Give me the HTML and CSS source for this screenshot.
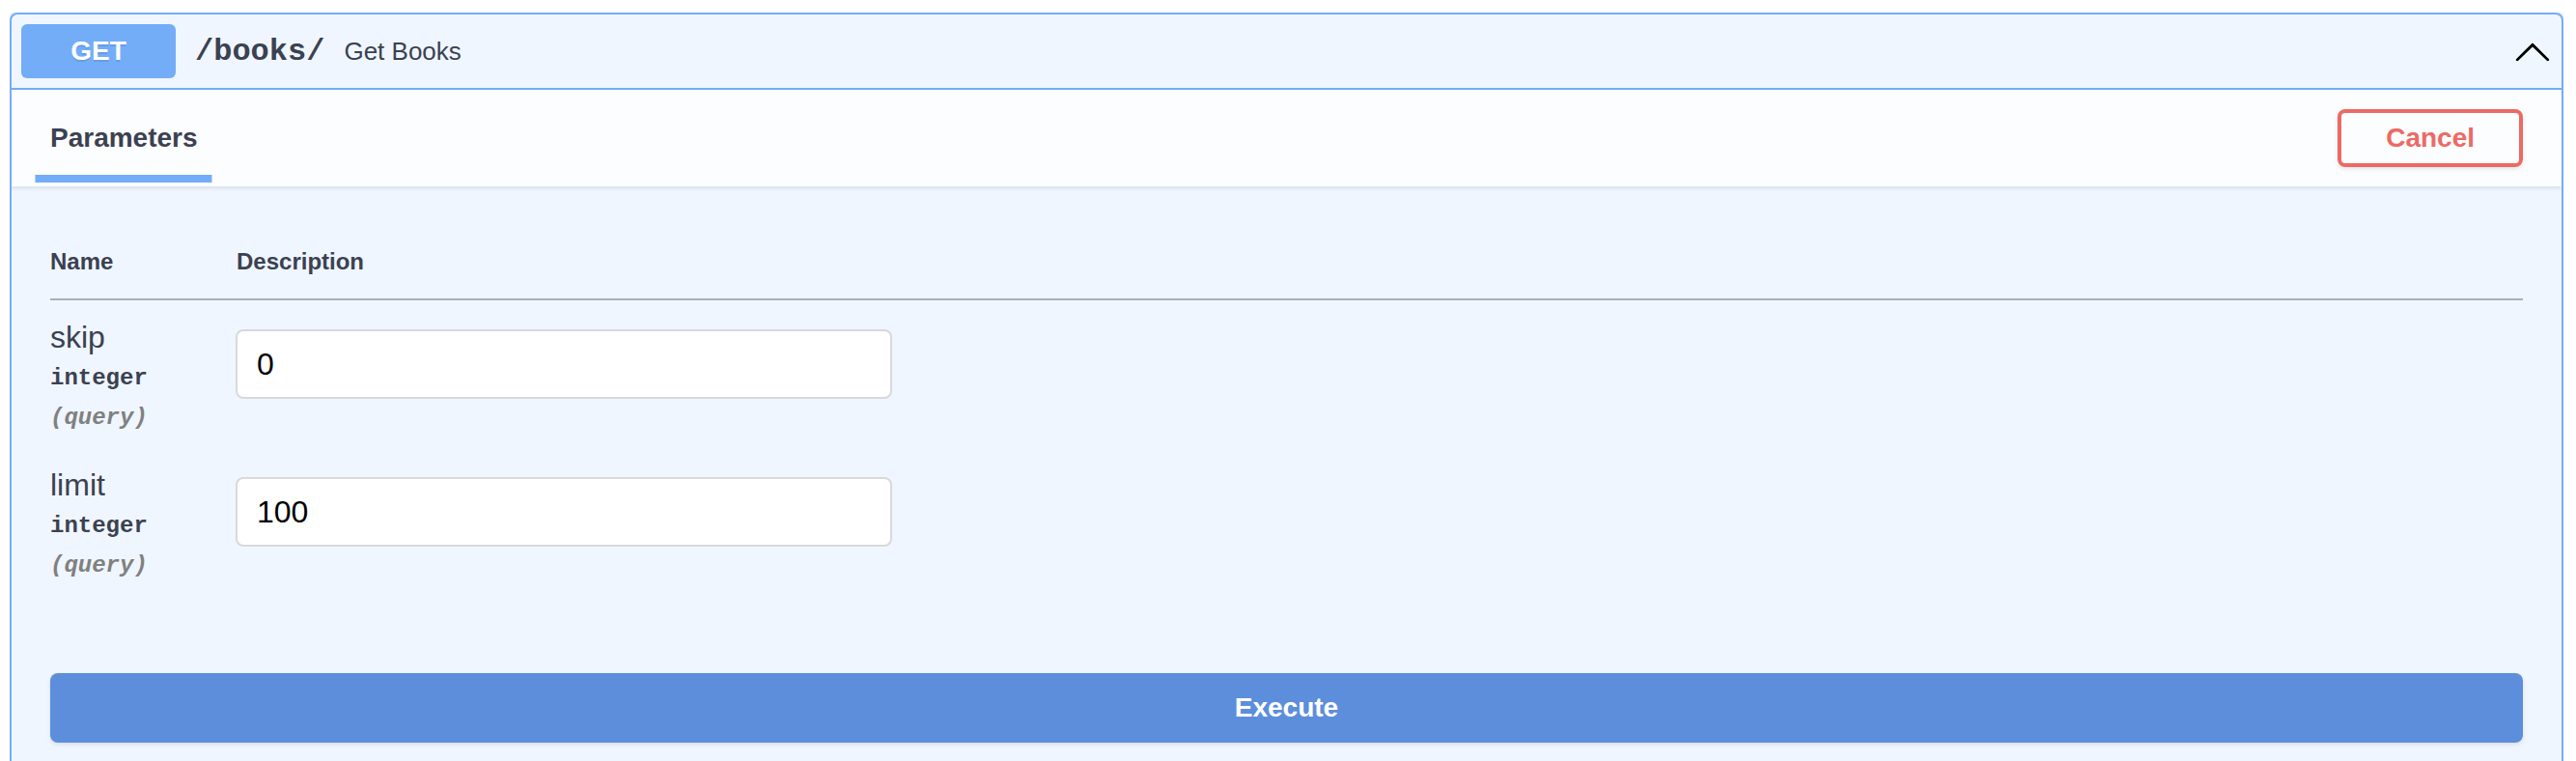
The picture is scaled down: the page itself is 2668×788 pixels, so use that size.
FILE: index.html
```html
<!DOCTYPE html>
<html lang="en">
<head>
<meta charset="utf-8">
<title>GET /books/</title>
<link rel="stylesheet" href="styles.css">
</head>
<body>
<div class="opblock">
  <div class="summary">
    <span class="method">GET</span>
    <span class="path">/books/</span>
    <span class="summary-desc">Get Books</span>
    <button class="arrow" type="button" aria-label="Collapse operation">
      <svg width="40" height="40" viewBox="0 0 20 20" aria-hidden="true"><path d="M17.418 14.908c.272.268.709.268.979 0s.271-.701 0-.969l-7.908-7.83c-.27-.268-.707-.268-.979 0l-7.908 7.83c-.27.268-.27.701 0 .969.271.268.709.268.979 0L10 7.689l7.418 7.219z"/></svg>
    </button>
  </div>
  <div class="section-header">
    <h4 class="tab-title"><span class="tab-label">Parameters</span></h4>
    <button class="btn-cancel" type="button">Cancel</button>
  </div>
  <div class="table-container">
    <div class="params">
      <div class="params-head">
        <div class="th th-name">Name</div>
        <div class="th">Description</div>
      </div>
      <div class="param-row">
        <div class="col-name">
          <div class="p-name">skip</div>
          <div class="p-type">integer</div>
          <div class="p-in">(query)</div>
        </div>
        <div class="col-desc">
          <input class="p-input" type="text" value="0">
        </div>
      </div>
      <div class="param-row">
        <div class="col-name">
          <div class="p-name">limit</div>
          <div class="p-type">integer</div>
          <div class="p-in">(query)</div>
        </div>
        <div class="col-desc">
          <input class="p-input" type="text" value="100">
        </div>
      </div>
    </div>
  </div>
  <div class="execute-wrapper">
    <button class="btn-execute" type="button">Execute</button>
  </div>
</div>
</body>
</html>
```

FILE: styles.css
```css
*, *::before, *::after {
  box-sizing: border-box;
}

html, body {
  background: #ffffff;
}

body {
  margin: 13px 13px 0 10px;
  font-family: "Liberation Sans", Arial, sans-serif;
  color: #3b4151;
}

.opblock {
  border: 2px solid #73adf8;
  border-radius: 8px;
  background: #eff6ff;
  box-shadow: 0 0 6px rgba(0, 0, 0, 0.19);
  overflow: hidden;
}

.summary {
  display: flex;
  align-items: center;
  padding: 10px;
  border-bottom: 2px solid #73adf8;
}

.method {
  min-width: 160px;
  padding: 12px 0;
  background: #73adf8;
  border-radius: 6px;
  color: #ffffff;
  font-size: 28px;
  line-height: 32px;
  font-weight: 700;
  text-align: center;
  text-shadow: 0 2px 0 rgba(0, 0, 0, 0.1);
}

.path {
  padding: 0 20px;
  font-family: "Liberation Mono", "Courier New", monospace;
  font-size: 32px;
  font-weight: 700;
  color: #3b4151;
}

.summary-desc {
  flex: 1;
  font-size: 26px;
  color: #3b4151;
}

.arrow {
  display: flex;
  padding: 0;
  border: 0;
  background: transparent;
  cursor: pointer;
}

.arrow svg {
  fill: #000000;
}

.section-header {
  display: flex;
  align-items: center;
  min-height: 100px;
  padding: 16px 40px;
  background: rgba(255, 255, 255, 0.8);
  box-shadow: 0 2px 4px rgba(0, 0, 0, 0.1);
}

.tab-title {
  margin: 0;
  font-size: 28px;
  line-height: 32px;
  font-weight: 700;
  color: #3b4151;
}

.tab-label {
  position: relative;
  display: inline-block;
}

.tab-label::after {
  content: "";
  position: absolute;
  left: 50%;
  bottom: -30px;
  width: 120%;
  height: 8px;
  background: #73adf8;
  transform: translateX(-50%);
}

.btn-cancel {
  margin-left: auto;
  padding: 10px 46px;
  border: 4px solid #ec6a64;
  border-radius: 8px;
  background: transparent;
  box-shadow: 0 2px 4px rgba(0, 0, 0, 0.1);
  color: #ec6a64;
  font-family: "Liberation Sans", Arial, sans-serif;
  font-size: 28px;
  line-height: 32px;
  font-weight: 700;
  cursor: pointer;
}

.table-container {
  padding: 40px;
}

.params-head {
  display: grid;
  grid-template-columns: 193px 1fr;
  border-bottom: 2px solid #a9afba;
}

.th {
  padding: 24px 0;
  font-size: 24px;
  line-height: 28px;
  font-weight: 700;
  color: #3b4151;
}

.param-row {
  display: grid;
  grid-template-columns: 192px 1fr;
}

.col-name {
  padding: 20px 0 17px;
}

.col-desc {
  padding: 20px 0 0;
}

.p-name {
  font-size: 32px;
  line-height: 37px;
  color: #3b4151;
}

.p-type {
  padding: 10px 0 13px;
  font-family: "Liberation Mono", "Courier New", monospace;
  font-size: 24px;
  line-height: 28px;
  font-weight: 700;
  color: #3b4151;
}

.p-in {
  font-family: "Liberation Mono", "Courier New", monospace;
  font-size: 24px;
  line-height: 28px;
  font-style: italic;
  font-weight: 700;
  color: #808080;
}

.p-input {
  display: block;
  width: 680px;
  height: 72px;
  margin: 10px 0;
  padding: 0 20px;
  border: 2px solid #d9d9d9;
  border-radius: 8px;
  background: #ffffff;
  color: #000000;
  font-family: "Liberation Sans", Arial, sans-serif;
  font-size: 32px;
}

.execute-wrapper {
  padding: 40px;
}

.btn-execute {
  display: block;
  width: 100%;
  height: 72px;
  padding: 0;
  border: 0;
  border-radius: 8px;
  background: #5c8edc;
  box-shadow: 0 2px 4px rgba(0, 0, 0, 0.1);
  color: #ffffff;
  font-family: "Liberation Sans", Arial, sans-serif;
  font-size: 28px;
  font-weight: 700;
  cursor: pointer;
}
```
